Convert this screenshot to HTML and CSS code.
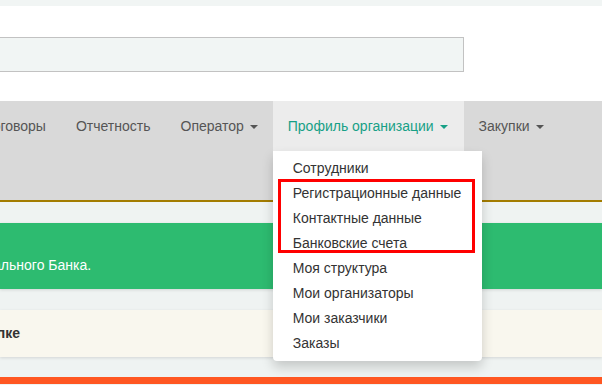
FILE: index.html
```html
<!DOCTYPE html>
<html lang="ru">

<head>
    <meta charset="UTF-8">
    <meta name="viewport" content="width=device-width, initial-scale=1.0">
    <title>Профиль организации</title>
    <link rel="stylesheet" href="styles.css">
</head>

<body>
    <div class="top-strip"></div>

    <header class="header">
        <div class="search-box"></div>
    </header>

    <nav class="navbar">
        <ul class="nav-list">
            <li class="nav-item"><a href="#">Договоры</a></li>
            <li class="nav-item"><a href="#">Отчетность</a></li>
            <li class="nav-item"><a href="#">Оператор <span class="caret"></span></a></li>
            <li class="nav-item active">
                <a href="#">Профиль организации <span class="caret"></span></a>
                <ul class="dropdown">
                    <li><a href="#">Сотрудники</a></li>
                    <li><a href="#">Регистрационные данные</a></li>
                    <li><a href="#">Контактные данные</a></li>
                    <li><a href="#">Банковские счета</a></li>
                    <li><a href="#">Моя структура</a></li>
                    <li><a href="#">Мои организаторы</a></li>
                    <li><a href="#">Мои заказчики</a></li>
                    <li><a href="#">Заказы</a></li>
                    <!-- highlight around the bank related items -->
                    <div class="highlight"></div>
                </ul>
            </li>
            <li class="nav-item"><a href="#">Закупки <span class="caret"></span></a></li>
        </ul>
    </nav>

    <main class="content">
        <div class="panel panel-green">
            <p>Центрального Банка.</p>
        </div>
        <div class="panel panel-cream">
            <p>в папке</p>
        </div>
    </main>

    <div class="bottom-bar"></div>
</body>

</html>
```

FILE: styles.css
```css
body {
    font-family: "Liberation Sans", Arial, sans-serif;
    font-size: 14px;
    color: #333;
    margin: 0;
    width: 602px;
    height: 385px;
    overflow: hidden;
    background: #eff3f2;
}

a {
    text-decoration: none;
    color: inherit;
}

.top-strip {
    height: 6px;
    background: #f1f5f4;
}

.header {
    height: 95px;
    background: #fff;
    padding-top: 31px;
    box-sizing: border-box;
}

.search-box {
    width: 472px;
    height: 35px;
    margin-left: -8px;
    background: #f1f5f4;
    border: 1px solid #c2c2c2;
    box-sizing: border-box;
}

.navbar {
    height: 99px;
    background: #d9d9d9;
    border-bottom: 2px solid #a37c00;
}

.nav-list {
    display: flex;
    list-style: none;
    margin: 0 0 0 -32px;
    padding: 0;
}

.nav-item {
    position: relative;
}

.nav-item > a {
    display: block;
    line-height: 50px;
    padding: 0 15px;
    color: #555;
}

.nav-item.active > a {
    background: #ececec;
    color: #17a086;
    padding-right: 16px;
}

.caret {
    display: inline-block;
    width: 0;
    height: 0;
    margin-left: 2px;
    vertical-align: middle;
    border-top: 4px solid;
    border-left: 4px solid transparent;
    border-right: 4px solid transparent;
}

.dropdown {
    position: absolute;
    top: 50px;
    left: 0;
    width: 209px;
    margin: 0;
    padding: 5px 0;
    list-style: none;
    background: #fff;
    border-radius: 0 0 4px 4px;
    box-shadow: 0 6px 12px rgba(0, 0, 0, 0.18);
    z-index: 10;
}

.dropdown a {
    display: block;
    line-height: 25px;
    padding: 0 20px;
    color: #333;
    white-space: nowrap;
}

.highlight {
    position: absolute;
    top: 28px;
    left: 5px;
    width: 197px;
    height: 74px;
    border: 3px solid #f00;
    box-sizing: border-box;
}

.content {
    padding: 21px 0 20px;
}

.panel {
    box-shadow: 0 1px 3px rgba(0, 0, 0, 0.12);
}

.panel p {
    margin: 0;
    white-space: nowrap;
}

.panel-green {
    height: 66px;
    background: #2dbb70;
    color: #fff;
    padding-top: 34px;
    box-sizing: border-box;
    margin-bottom: 21px;
}

.panel-green p {
    margin-left: -47px;
}

.panel-cream {
    height: 47px;
    background: #f9f7ee;
    padding-top: 15px;
    box-sizing: border-box;
    font-weight: bold;
}

.panel-cream p {
    margin-left: -32px;
}

.bottom-bar {
    height: 7px;
    background: #ff5722;
}
```
